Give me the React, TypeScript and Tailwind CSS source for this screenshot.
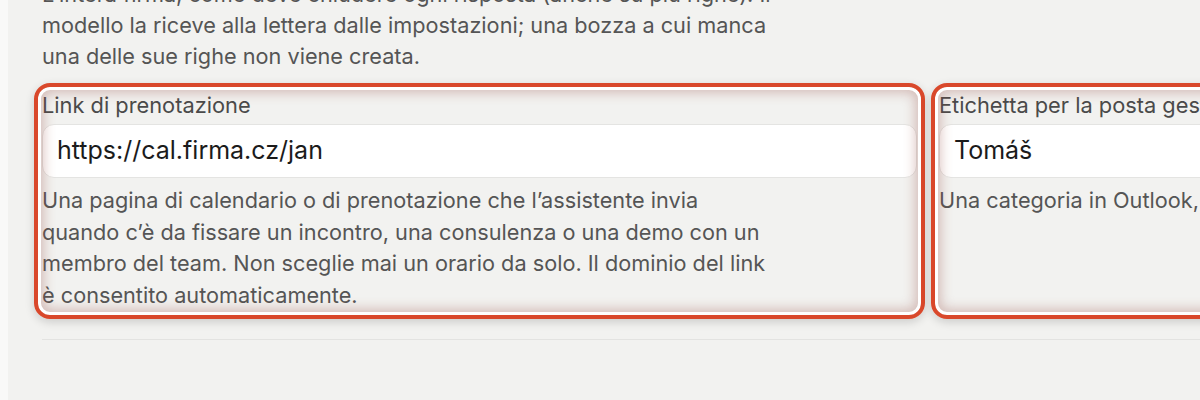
import React from "react";

function Highlight() {
  return (
    <div className="pointer-events-none absolute -inset-2 rounded-[16px] border-4 border-[#d9482b] shadow-[inset_0_0_0_3px_#ffffff,inset_0_0_12px_6px_rgba(150,75,65,0.32),0_3px_10px_rgba(0,0,0,0.16)]" />
  );
}

function Field({ label, value, help }: { label: string; value: string; help: string }) {
  return (
    <div className="relative flex flex-col">
      <div className="pt-[1px] text-[21.8px] leading-[27px] text-[#4a4a4a]">{label}</div>
      <div className="mt-[5px] flex h-[54px] items-center rounded-[12px] border border-[#e4e4e2] bg-white pl-[14px] text-[25px] text-[#1b1b1b]">
        {value}
      </div>
      <p className="mt-[7px] max-w-[724px] text-[21.7px] leading-[31.5px] text-[#555555]">{help}</p>
      <Highlight />
    </div>
  );
}

export default function App() {
  return (
    <div
      className="flex h-[400px] w-[1200px] overflow-hidden bg-[#f2f2f0]"
      style={{ fontFamily: "Inter, 'Noto Sans', sans-serif" }}
    >
      <div className="w-2 shrink-0 bg-[#f9f9f8]" />
      <div className="min-w-0 flex-1 overflow-hidden pl-[34px]">
        <p className="-mt-[21px] max-w-[734px] text-[21.7px] leading-[31px] text-[#555555]">
          L’intera firma, come deve chiudere ogni risposta (anche su più righe). Il modello la riceve alla
          lettera dalle impostazioni; una bozza a cui manca una delle sue righe non viene creata.
        </p>
        <div className="mt-[19px] border-b border-[#e3e3e1] pb-[28px]">
          <div className="grid grid-cols-[875px_875px] gap-[22px]">
            <Field
              label="Link di prenotazione"
              value="https://cal.firma.cz/jan"
              help="Una pagina di calendario o di prenotazione che l’assistente invia quando c’è da fissare un incontro, una consulenza o una demo con un membro del team. Non sceglie mai un orario da solo. Il dominio del link è consentito automaticamente."
            />
            <Field
              label="Etichetta per la posta gestita"
              value="Tomáš"
              help="Una categoria in Outlook, un’etichetta in Gmail."
            />
          </div>
        </div>
      </div>
    </div>
  );
}
